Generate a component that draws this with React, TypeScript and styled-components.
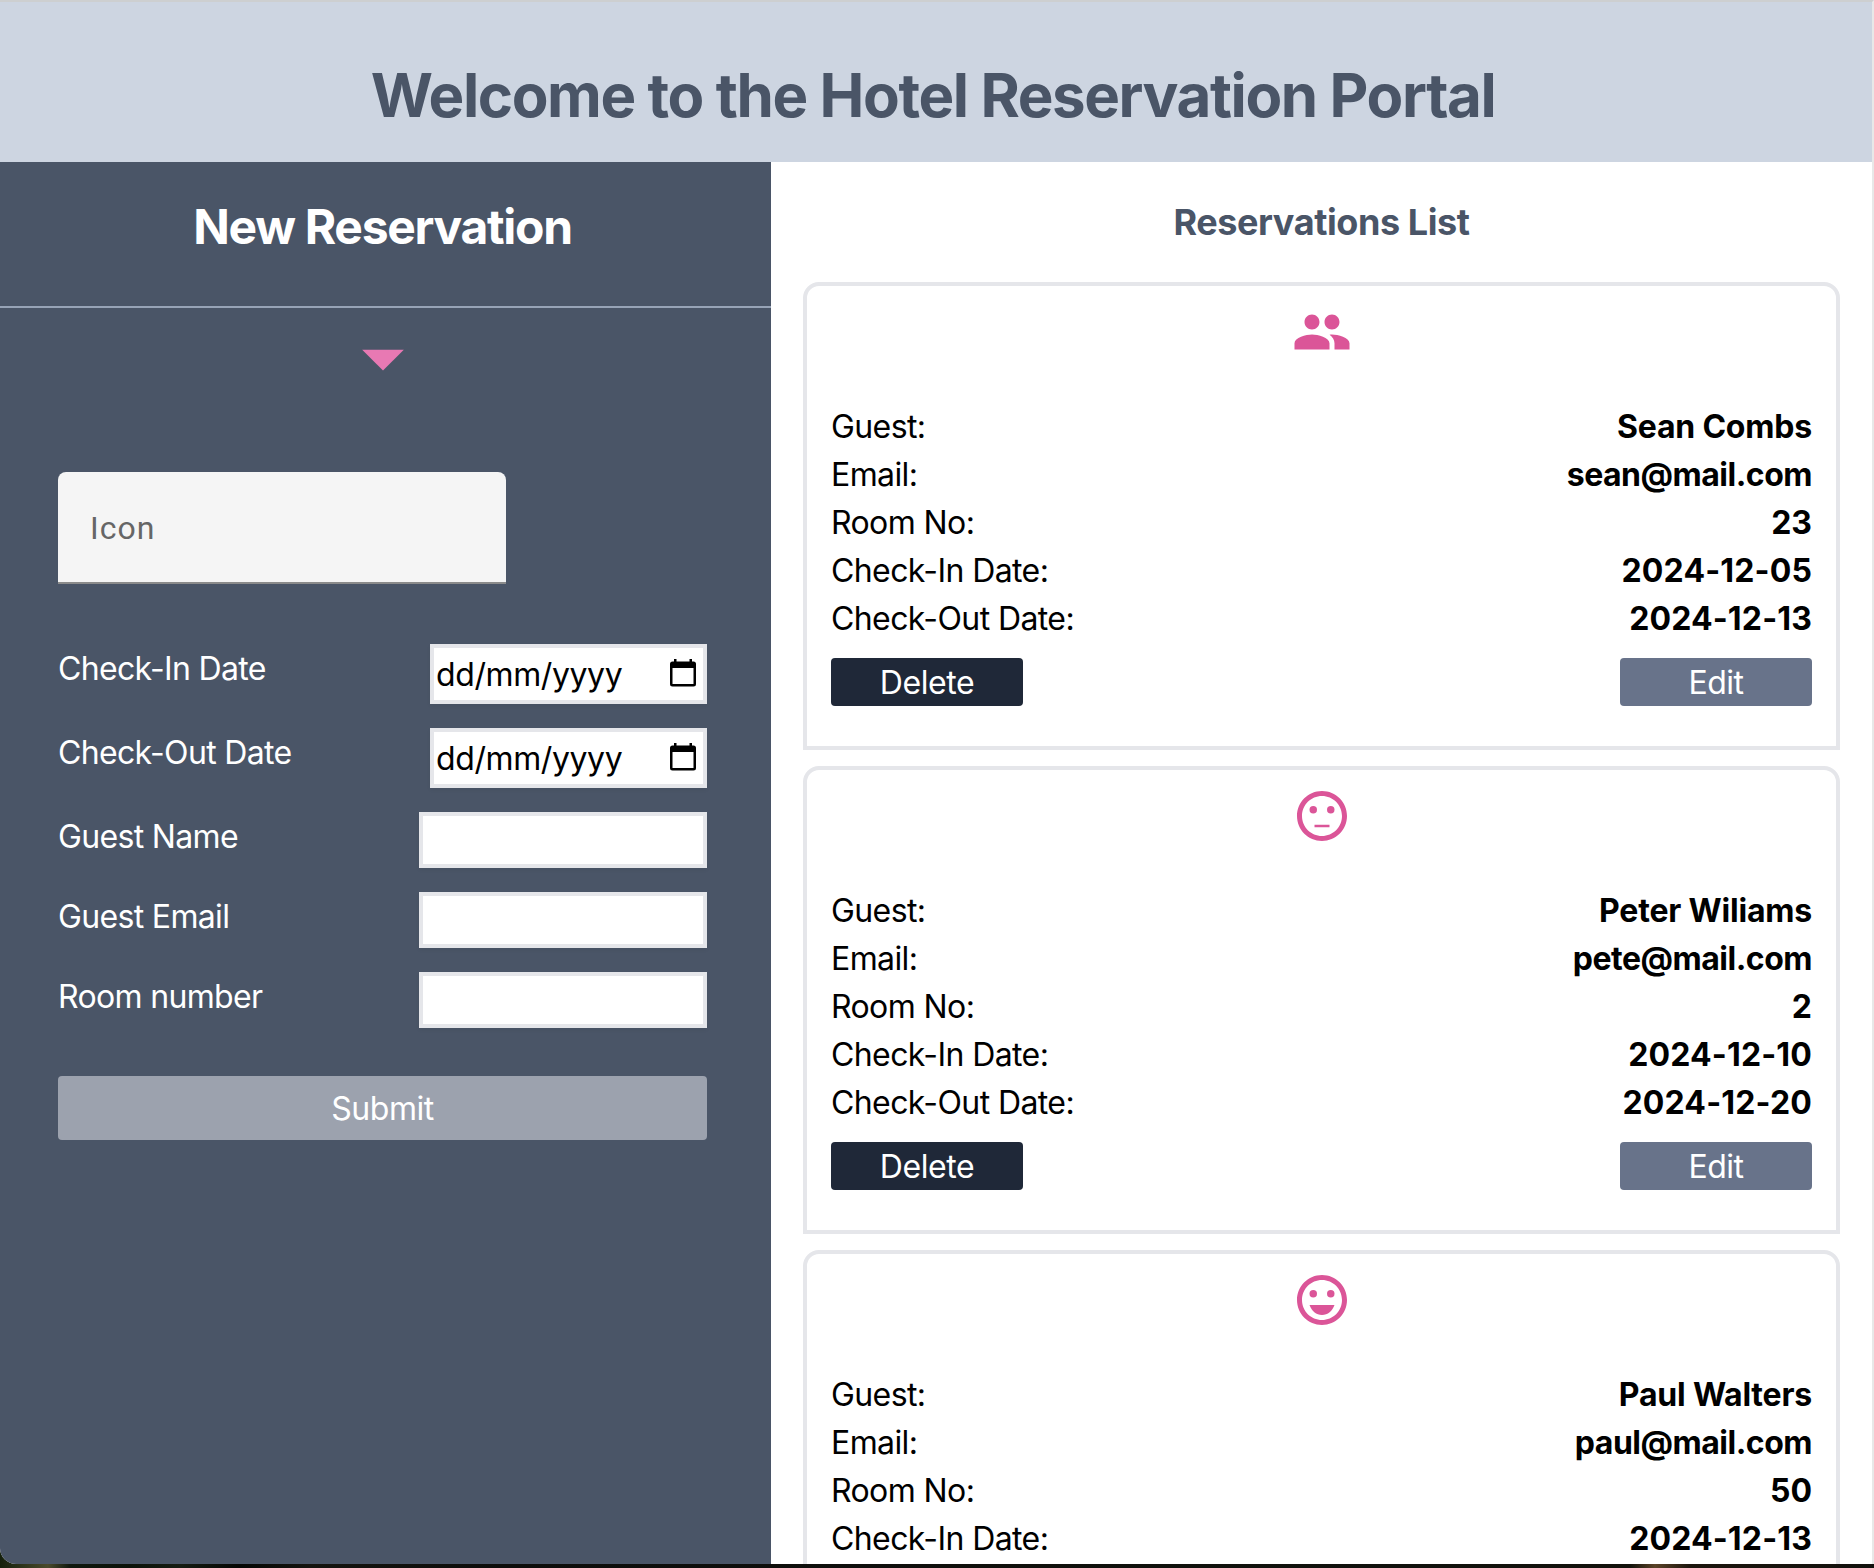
import React from "react";
import styled, { createGlobalStyle } from "styled-components";

const GlobalStyle = createGlobalStyle`
  *, *::before, *::after { box-sizing: border-box; }
  html, body { margin: 0; padding: 0; overflow: hidden; }
  body {
    background: #10140c;
    font-family: Inter, "Liberation Sans", sans-serif;
    font-size: 32px;
    line-height: 48px;
    color: #000;
  }
`;

const Desktop = styled.div`
  width: 1874px;
  height: 1568px;
  background: linear-gradient(90deg, #15200c 0, #4a4a2c 48px, #10180e 70px, #0c1209 130px, #161c12 180px, #050604 240px, #15140f 310px, #0d0d0b 500px, #11120d 1400px, #12120b 1630px, #5b4327 1655px, #1c150d 1690px, #12110d 1874px);
`;

const Window = styled.div`
  display: flex;
  flex-direction: column;
  height: 1564px;
  overflow: hidden;
  background: #fff;
  border-top: 2px solid #cdcfd0;
  border-right: 2px solid #e8e8e8;
  border-bottom-left-radius: 16px;
`;

const Header = styled.header`
  flex: none;
  height: 160px;
  padding: 63px 6px 0 0;
  background: #cdd5e1;
`;

const PageTitle = styled.h1`
  margin: 0;
  font-size: 60px;
  line-height: 60px;
  font-weight: 700;
  letter-spacing: -1.4px;
  text-align: center;
  color: #4a5567;
`;

const Columns = styled.main`
  display: flex;
  flex: 1;
  min-height: 0;
`;

const Sidebar = styled.section`
  flex: none;
  width: 771px;
  background: #4a5567;
  color: #fff;
`;

const SidebarHead = styled.div`
  height: 146px;
  padding: 37px 6px 0 0;
  border-bottom: 2px solid #97a3b6;
`;

const SidebarTitle = styled.h2`
  margin: 0;
  font-size: 48px;
  line-height: 56px;
  font-weight: 700;
  letter-spacing: -1.3px;
  text-align: center;
`;

const ToggleRow = styled.div`
  display: flex;
  justify-content: center;
  height: 100px;
  padding-right: 5px;
`;

const Form = styled.form`
  display: flex;
  flex-direction: column;
  padding: 64px 64px 0 58px;
`;

const IconSelect = styled.div`
  display: flex;
  align-items: center;
  width: 448px;
  height: 112px;
  margin-bottom: 60px;
  padding: 2px 0 0 32px;
  border-bottom: 2px solid #8b8b8b;
  border-radius: 8px 8px 0 0;
  background: #f5f5f5;
  color: #666;
  font-family: Roboto, "Liberation Sans", sans-serif;
  letter-spacing: 1px;
`;

const Field = styled.div`
  display: flex;
  justify-content: space-between;
  align-items: flex-start;
  margin-bottom: 24px;
`;

const Label = styled.label`
  padding-top: 1px;
  letter-spacing: -0.66px;
`;

const TextInput = styled.input`
  width: 288px;
  height: 56px;
  padding: 0 8px;
  border: 4px solid #e5e6ea;
  border-radius: 0;
  background: #fff;
  font: inherit;
  box-shadow: 0 2px 4px rgba(0, 0, 0, 0.05);
`;

const DateInput = styled.div`
  display: flex;
  align-items: flex-start;
  justify-content: space-between;
  width: 277px;
  height: 60px;
  padding: 3px 7px 0 2px;
  border: 4px solid #e5e6ea;
  background: #fff;
  color: #000;
  box-shadow: 0 2px 4px rgba(0, 0, 0, 0.05);
`;

const DateText = styled.span`
  letter-spacing: -0.4px;
`;

const CalendarGlyph = styled.svg`
  display: block;
  margin-top: 8px;
`;

const Submit = styled.button`
  height: 64px;
  margin-top: 24px;
  padding: 2px 0 0;
  border: 0;
  border-radius: 4px;
  background: #9ca2ae;
  color: #fff;
  font: inherit;
  letter-spacing: -0.45px;
`;

const ListPanel = styled.section`
  flex: 1;
  padding: 32px;
  background: #fff;
`;

const ListTitle = styled.h3`
  margin: 0 0 32px;
  font-size: 36px;
  line-height: 56px;
  font-weight: 700;
  letter-spacing: -0.42px;
  text-align: center;
  color: #4a5567;
`;

const Card = styled.article`
  height: 468px;
  margin-bottom: 16px;
  padding: 16px 24px 0;
  border: 4px solid #e5e6ea;
  border-radius: 16px 16px 0 0;
`;

const CardIcon = styled.div`
  display: flex;
  justify-content: center;
  height: 101px;
`;

const Row = styled.div`
  display: flex;
  justify-content: space-between;
  height: 48px;
`;

const Term = styled.span`
  letter-spacing: -0.6px;
`;

const Value = styled.span<{ $tracking: number }>`
  font-weight: 700;
  letter-spacing: ${(p) => p.$tracking}px;
`;

const Actions = styled.div`
  display: flex;
  justify-content: space-between;
  margin-top: 15px;
`;

const Action = styled.button<{ $tone: string }>`
  width: 192px;
  height: 48px;
  padding: 1px 0 0;
  border: 0;
  border-radius: 4px;
  background: ${(p) => p.$tone};
  color: #fff;
  font: inherit;
  line-height: 47px;
  letter-spacing: -0.45px;
`;

const FACE =
  "M11.99 2C6.47 2 2 6.48 2 12s4.47 10 9.99 10C17.52 22 22 17.52 22 12S17.52 2 11.99 2zM12 20c-4.42 0-8-3.58-8-8s3.58-8 8-8 8 3.58 8 8-3.58 8-8 8z";

type Mood = "people" | "neutral" | "happy";

function MoodIcon({ mood }: { mood: Mood }) {
  return (
    <svg width="60" height="60" viewBox="0 0 24 24" fill="#db5598">
      {mood === "people" ? (
        <path d="M16 11c1.66 0 2.99-1.34 2.99-3S17.66 5 16 5c-1.66 0-3 1.34-3 3s1.34 3 3 3zm-8 0c1.66 0 2.99-1.34 2.99-3S9.66 5 8 5C6.34 5 5 6.34 5 8s1.34 3 3 3zm0 2c-2.33 0-7 1.17-7 3.5V19h14v-2.5c0-2.33-4.67-3.5-7-3.5zm8 0c-.29 0-.62.02-.97.05 1.16.84 1.97 1.97 1.97 3.45V19h6v-2.5c0-2.33-4.67-3.5-7-3.5z" />
      ) : (
        <>
          <path d={FACE} />
          <circle cx="8.5" cy="9.5" r="1.5" />
          <circle cx="15.5" cy="9.5" r="1.5" />
          {mood === "neutral" ? (
            <path d="M9 15.5h6v1H9z" />
          ) : (
            <path d="M12 18c2.28 0 4.22-1.66 5-4H7c.78 2.34 2.72 4 5 4z" />
          )}
        </>
      )}
    </svg>
  );
}

function CalendarIcon() {
  return (
    <CalendarGlyph width="26" height="28" viewBox="0 0 26 28">
      <path
        fill="#000"
        fillRule="evenodd"
        d="M4 0h2.500v2.500h13V0H22v2.500h1.500A2.500 2.500 0 0 1 26 5v20a2.500 2.500 0 0 1-2.500 2.500h-21A2.500 2.500 0 0 1 0 25V5A2.500 2.500 0 0 1 2.500 2.500H4zM2.500 9v16h21V9z"
      />
    </CalendarGlyph>
  );
}

const reservations: { mood: Mood; guest: string; email: string; room: string; from: string; to: string }[] = [
  { mood: "people", guest: "Sean Combs", email: "sean@mail.com", room: "23", from: "2024-12-05", to: "2024-12-13" },
  { mood: "neutral", guest: "Peter Wiliams", email: "pete@mail.com", room: "2", from: "2024-12-10", to: "2024-12-20" },
  { mood: "happy", guest: "Paul Walters", email: "paul@mail.com", room: "50", from: "2024-12-13", to: "" },
];

function Detail({ term, value, tracking }: { term: string; value: string; tracking: number }) {
  return (
    <Row>
      <Term>{term}</Term>
      <Value $tracking={tracking}>{value}</Value>
    </Row>
  );
}

export default function App() {
  return (
    <Desktop>
      <GlobalStyle />
      <Window>
        <Header>
          <PageTitle>Welcome to the Hotel Reservation Portal</PageTitle>
        </Header>
        <Columns>
          <Sidebar>
            <SidebarHead>
              <SidebarTitle>New Reservation</SidebarTitle>
            </SidebarHead>
            <ToggleRow>
              <svg width="100" height="100" viewBox="0 0 24 24" fill="#e879b3">
                <path d="m7 10 5 5 5-5z" />
              </svg>
            </ToggleRow>
            <Form>
              <IconSelect>Icon</IconSelect>
              {["Check-In Date", "Check-Out Date"].map((name) => (
                <Field key={name}>
                  <Label>{name}</Label>
                  <DateInput>
                    <DateText>dd/mm/yyyy</DateText>
                    <CalendarIcon />
                  </DateInput>
                </Field>
              ))}
              {["Guest Name", "Guest Email", "Room number"].map((name) => (
                <Field key={name}>
                  <Label>{name}</Label>
                  <TextInput />
                </Field>
              ))}
              <Submit type="button">Submit</Submit>
            </Form>
          </Sidebar>
          <ListPanel>
            <ListTitle>Reservations List</ListTitle>
            {reservations.map((r) => (
              <Card key={r.email}>
                <CardIcon>
                  <MoodIcon mood={r.mood} />
                </CardIcon>
                <Detail term="Guest:" value={r.guest} tracking={-0.2} />
                <Detail term="Email:" value={r.email} tracking={-0.5} />
                <Detail term="Room No:" value={r.room} tracking={0} />
                <Detail term="Check-In Date:" value={r.from} tracking={0.15} />
                {r.to && (
                  <>
                    <Detail term="Check-Out Date:" value={r.to} tracking={0.15} />
                    <Actions>
                      <Action $tone="#1f2838">Delete</Action>
                      <Action $tone="#68738a">Edit</Action>
                    </Actions>
                  </>
                )}
              </Card>
            ))}
          </ListPanel>
        </Columns>
      </Window>
    </Desktop>
  );
}
